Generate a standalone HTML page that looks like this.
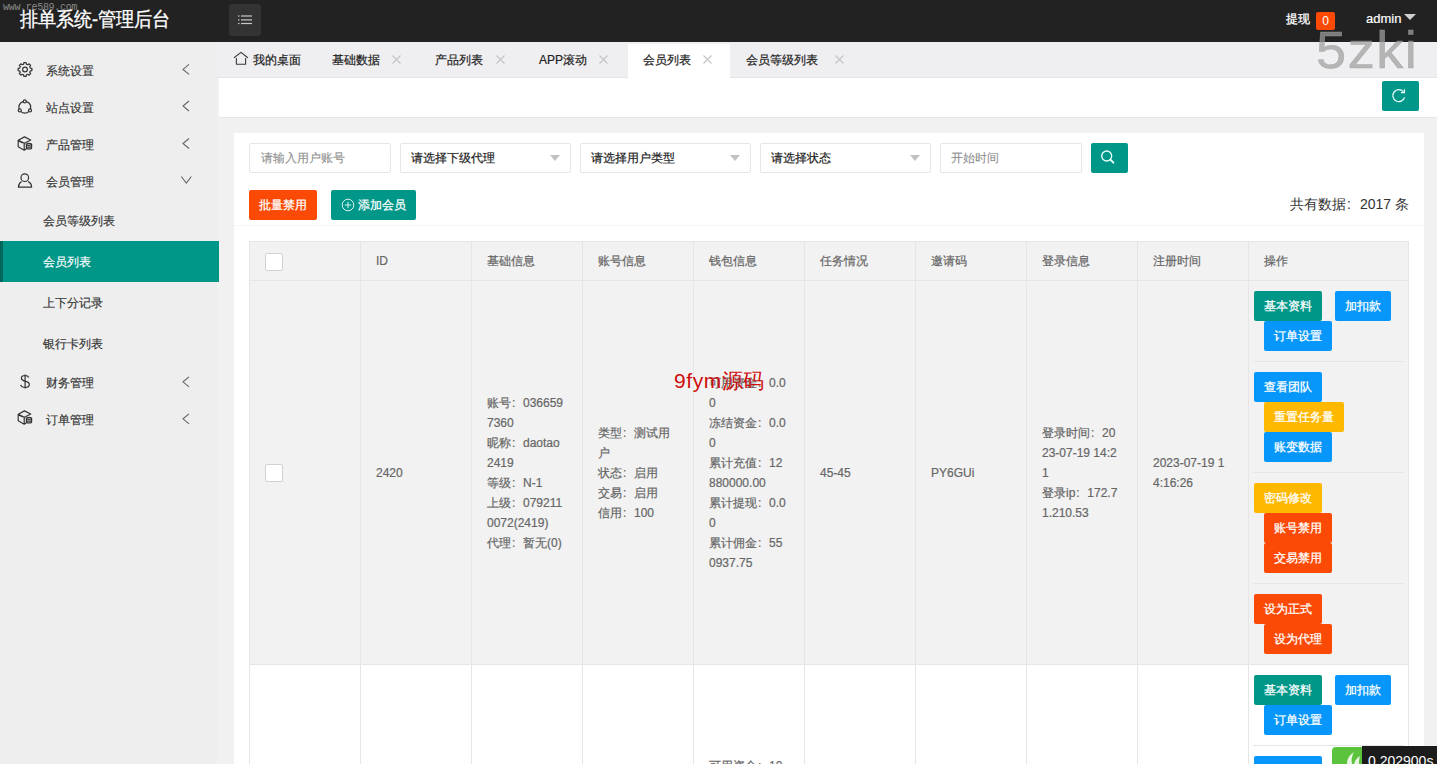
<!DOCTYPE html>
<html><head><meta charset="utf-8">
<style>
*{margin:0;padding:0;box-sizing:border-box}
html,body{width:1437px;height:764px;overflow:hidden;background:#f1f1f1;font-family:"Liberation Sans",sans-serif;font-size:12px;color:#333}
.a{position:absolute}
.hdr{left:0;top:0;width:1437px;height:42px;background:#222}
.wm1{left:3px;top:2px;font-family:"Liberation Mono",monospace;font-size:10px;line-height:12px;color:#8a8a8a;letter-spacing:-0.3px;z-index:2}
.title{left:20px;top:8px;font-size:18px;color:#fff;font-weight:normal;-webkit-text-stroke:0.3px #fff;line-height:22px;white-space:nowrap;transform:scaleY(1.1);transform-origin:0 50%}
.menubtn{left:229px;top:4px;width:32px;height:32px;background:#333;border-radius:3px}
.side{left:0;top:42px;width:217px;height:722px;background:#eee}
.nav{left:46px;font-size:12px;color:#333;line-height:14px;white-space:nowrap;-webkit-text-stroke:0.15px #333}
.sub{left:43px;font-size:12px;color:#333;line-height:14px;white-space:nowrap;-webkit-text-stroke:0.15px currentColor}
.ico{left:17px;width:16px;height:16px}
.chev{left:181px;width:10px;height:12px}
.tabs{left:216px;top:42px;width:1221px;height:36px;background:#efeef1;border-bottom:1px solid #e4e3e6}
.tab{top:53px;font-size:12px;color:#222;line-height:14px;white-space:nowrap;-webkit-text-stroke:0.2px #222}
.x{top:55px;width:9px;height:9px}
.strip{left:219px;top:78px;width:1218px;height:40px;background:#fff;border-bottom:1px solid #e6e6e6}
.card{left:234px;top:133px;width:1190px;height:640px;background:#fff}
.inp{height:30px;border:1px solid #e6e6e6;background:#fff;border-radius:2px}
.ph{font-size:12px;color:#8f8f8f;line-height:14px;white-space:nowrap;-webkit-text-stroke:0.1px #8f8f8f}
.sel{font-size:12px;color:#222;line-height:14px;white-space:nowrap;-webkit-text-stroke:0.2px #222}
.btn{height:30px;border-radius:2px;color:#fff;font-size:12px;line-height:30px;text-align:center;white-space:nowrap;-webkit-text-stroke:0.25px #fff}
.g{background:#009688}.b{background:#0797fb}.o{background:#ffb800}.r{background:#fb4a05}
table{border-collapse:collapse;table-layout:fixed}
td,th{border:1px solid #e6e6e6;font-weight:normal;text-align:left;color:#666;font-size:12px;line-height:20px;vertical-align:middle;padding:0 15px;word-break:break-all}
.wm2{left:1316px;top:19.5px;font-size:52px;line-height:60px;color:rgba(160,160,160,.72);letter-spacing:1.5px;white-space:nowrap;transform:scaleX(1.04);transform-origin:0 0;-webkit-text-stroke:0.5px rgba(160,160,160,.72)}
.arr{width:0;height:0;border-left:5.5px solid transparent;border-right:5.5px solid transparent;border-top:6px solid #c2c2c2}
.cell{font-size:12px;color:#666;line-height:20px;white-space:nowrap;-webkit-text-stroke:0.2px #666}
.hl{background:#e6e6e6}
.c{display:inline-block;width:1em;font-style:normal;text-indent:1px}
</style></head><body>
<!-- header -->
<div class="a hdr"></div>
<div class="a wm1">www.re589.com</div>
<div class="a title">排单系统-管理后台</div>
<div class="a menubtn"></div>
<svg class="a" style="left:237px;top:14px" width="16" height="12" viewBox="0 0 16 12"><g fill="#c8c8c8"><rect x="1" y="1.4" width="1.5" height="1.2"/><rect x="4" y="1.4" width="11" height="1.2"/><rect x="1" y="5.3" width="1.5" height="1.2"/><rect x="4" y="5.3" width="11" height="1.2"/><rect x="1" y="8.9" width="1.5" height="1.2"/><rect x="4" y="8.9" width="11" height="1.2"/></g></svg>


<div class="a" style="left:1286px;top:12px;font-size:12px;color:#fff;line-height:14px;-webkit-text-stroke:0.3px #fff">提现</div>
<div class="a" style="left:1316px;top:12px;width:19px;height:18px;background:#fb4a05;border-radius:2px;color:#fff;font-size:12px;line-height:18px;text-align:center">0</div>
<div class="a" style="left:1366px;top:11px;font-size:13px;color:#fff;line-height:15px;-webkit-text-stroke:0.2px #fff">admin</div>
<div class="a" style="left:1404px;top:14px;width:0;height:0;border-left:6px solid transparent;border-right:6px solid transparent;border-top:6px solid #d0d0d0"></div>

<!-- sidebar -->
<div class="a side"></div>
<div class="a nav" style="top:64px">系统设置</div>
<div class="a nav" style="top:101px">站点设置</div>
<div class="a nav" style="top:138px">产品管理</div>
<div class="a nav" style="top:175px">会员管理</div>
<div class="a sub" style="top:214px">会员等级列表</div>
<div class="a" style="left:0;top:241px;width:219px;height:41px;background:#009688"></div>
<div class="a" style="left:0;top:241px;width:3px;height:41px;background:#00665c"></div>
<div class="a sub" style="top:255px;color:#fff">会员列表</div>
<div class="a sub" style="top:296px">上下分记录</div>
<div class="a sub" style="top:337px">银行卡列表</div>
<div class="a nav" style="top:376px">财务管理</div>
<div class="a nav" style="top:413px">订单管理</div>


<svg class="a" style="left:0;top:42px" width="216" height="400" viewBox="0 42 216 400" fill="none" stroke="#333" stroke-width="1.2">
<!-- gear -->
<path d="M30.33 68.13 L31.91 68.40 L31.91 70.60 L30.33 70.87 L29.73 72.30 L30.66 73.61 L29.11 75.16 L27.80 74.23 L26.37 74.83 L26.10 76.41 L23.90 76.41 L23.63 74.83 L22.20 74.23 L20.89 75.16 L19.34 73.61 L20.27 72.30 L19.67 70.87 L18.09 70.60 L18.09 68.40 L19.67 68.13 L20.27 66.70 L19.34 65.39 L20.89 63.84 L22.20 64.77 L23.63 64.17 L23.90 62.59 L26.10 62.59 L26.37 64.17 L27.80 64.77 L29.11 63.84 L30.66 65.39 L29.73 66.70Z" stroke-linejoin="round"/>
<circle cx="25" cy="69.5" r="2.4"/>
<!-- share/network -->
<circle cx="24.8" cy="107.2" r="5.9"/>
<circle cx="24.8" cy="101.4" r="1.5" fill="#eee"/>
<circle cx="19.7" cy="110.4" r="1.5" fill="#eee"/>
<circle cx="30" cy="110.4" r="1.5" fill="#eee"/>
<!-- box 1 -->
<g transform="translate(12,131)"><path d="M6.2 9.2L12.5 5.9 18.7 9 12.5 12.3zM6.2 9.2V15.8L12.2 19.2V12.3M12.2 19.2L14.3 18M8 10.5l2.5 1.4" stroke-linejoin="round"/><ellipse cx="17" cy="13.3" rx="2.6" ry="1"/><path d="M14.4 13.3v3.6c0 .6 1.2 1 2.6 1s2.6-.4 2.6-1v-3.6M14.4 15.2c0 .6 1.2 1 2.6 1s2.6-.4 2.6-1"/></g>
<!-- user -->
<circle cx="24.8" cy="177.7" r="3.8"/>
<path d="M21.5 181.6C19.5 183 18.4 184.8 18.4 187.2H31.6C31.6 184.6 30 182.4 28 181.6" stroke-linejoin="round"/>
<!-- dollar -->
<path d="M28.8 377.6c-.6-1.4-2-2.1-3.7-2.1-2.2 0-3.7 1.1-3.7 2.7 0 1.7 1.5 2.4 3.7 3 2.4.6 4.2 1.3 4.2 3.3 0 1.8-1.7 3-4.2 3-2.2 0-3.9-1-4.5-2.6M25.1 374.4v14.2"/>
<!-- box 2 -->
<g transform="translate(12,405)"><path d="M6.2 9.2L12.5 5.9 18.7 9 12.5 12.3zM6.2 9.2V15.8L12.2 19.2V12.3M12.2 19.2L14.3 18M8 10.5l2.5 1.4" stroke-linejoin="round"/><ellipse cx="17" cy="13.3" rx="2.6" ry="1"/><path d="M14.4 13.3v3.6c0 .6 1.2 1 2.6 1s2.6-.4 2.6-1v-3.6M14.4 15.2c0 .6 1.2 1 2.6 1s2.6-.4 2.6-1"/></g>
<!-- chevrons -->
<g stroke="#666" stroke-width="1.1"><path d="M189 64.4L183 69.4 189 74.4"/><path d="M189 101L183 106 189 111"/><path d="M189 138.5L183 143.5 189 148.5"/><path d="M181.3 176.5L186.3 183 191.3 176.5"/><path d="M189 376.8L183 381.8 189 386.8"/><path d="M189 413.8L183 418.8 189 423.8"/></g>
</svg>

<!-- tabs -->
<div class="a tabs"></div>
<div class="a" style="left:628px;top:44px;width:102px;height:35px;background:#fff"></div>
<svg class="a" style="left:233px;top:51px" width="16" height="15" viewBox="0 0 16 15" fill="none" stroke="#3a3a3a" stroke-width="1.1"><path d="M1 6.7L8 1.4 14.8 6.7M3.4 6.9V13.3H12.6V6.9" stroke-linejoin="round"/></svg>
<div class="a tab" style="left:253px">我的桌面</div>
<div class="a tab" style="left:332px">基础数据</div><svg class="a x" style="left:392px" viewBox="0 0 9 9"><path d="M.5 .5L8.5 8.5M8.5 .5L.5 8.5" stroke="#c4c4c4" stroke-width="1.1"/></svg>
<div class="a tab" style="left:435px">产品列表</div><svg class="a x" style="left:496px" viewBox="0 0 9 9"><path d="M.5 .5L8.5 8.5M8.5 .5L.5 8.5" stroke="#c4c4c4" stroke-width="1.1"/></svg>
<div class="a tab" style="left:539px">APP滚动</div><svg class="a x" style="left:599px" viewBox="0 0 9 9"><path d="M.5 .5L8.5 8.5M8.5 .5L.5 8.5" stroke="#c4c4c4" stroke-width="1.1"/></svg>
<div class="a tab" style="left:643px">会员列表</div><svg class="a x" style="left:703px" viewBox="0 0 9 9"><path d="M.5 .5L8.5 8.5M8.5 .5L.5 8.5" stroke="#c4c4c4" stroke-width="1.1"/></svg>
<div class="a tab" style="left:746px">会员等级列表</div><svg class="a x" style="left:835px" viewBox="0 0 9 9"><path d="M.5 .5L8.5 8.5M8.5 .5L.5 8.5" stroke="#c4c4c4" stroke-width="1.1"/></svg>


<!-- strip -->
<div class="a strip"></div>
<div class="a btn g" style="left:1382px;top:81px;width:37px;height:30px"></div>
<svg class="a" style="left:1391px;top:88px" width="16" height="16" viewBox="0 0 16 16" fill="none" stroke="#e8fffa" stroke-width="1.3"><path d="M13.6 9.4A6 6 0 1 1 12.3 3.6"/><path d="M13.4 1.2V4.7H9.9" stroke-linejoin="miter"/></svg>
<div class="a wm2">5zki</div>


<!-- card -->
<div class="a card"></div>
<div class="a inp" style="left:249px;top:143px;width:142px"></div><div class="a ph" style="left:261px;top:151px">请输入用户账号</div>
<div class="a inp" style="left:400px;top:143px;width:171px"></div><div class="a sel" style="left:411px;top:151px">请选择下级代理</div><div class="a arr" style="left:550px;top:155px"></div>
<div class="a inp" style="left:580px;top:143px;width:171px"></div><div class="a sel" style="left:591px;top:151px">请选择用户类型</div><div class="a arr" style="left:730px;top:155px"></div>
<div class="a inp" style="left:760px;top:143px;width:171px"></div><div class="a sel" style="left:771px;top:151px">请选择状态</div><div class="a arr" style="left:910px;top:155px"></div>
<div class="a inp" style="left:940px;top:143px;width:142px"></div><div class="a ph" style="left:951px;top:151px">开始时间</div>
<div class="a btn g" style="left:1091px;top:143px;width:37px"></div><svg class="a" style="left:1099px;top:148px" width="18" height="18" viewBox="0 0 18 18" fill="none" stroke="#e8fffa" stroke-width="1.3"><circle cx="7.7" cy="8" r="5"/><path d="M11.4 11.6L14.4 14.6" stroke-width="2" stroke-linecap="round"/></svg>
<div class="a btn r" style="left:249px;top:190px;width:68px">批量禁用</div>
<div class="a btn g" style="left:331px;top:190px;width:85px;text-align:left;padding-left:27px">添加会员</div><svg class="a" style="left:341px;top:198px" width="14" height="14" viewBox="0 0 14 14" fill="none" stroke="#d9f5f0" stroke-width="1"><circle cx="7" cy="7" r="5.8"/><path d="M7 3.8V10.2M3.8 7H10.2"/></svg>
<div class="a" style="left:1290px;top:196px;font-size:14px;color:#333;line-height:16px;white-space:nowrap">共有数据<i class="c">:</i>2017 条</div>
<div class="a" style="left:234px;top:225px;width:1190px;height:1px;background:#f6f6f6"></div>
<div class="a" style="left:249px;top:241px;width:1160px;height:424px;background:#f2f2f2"></div>
<div class="a" style="left:249px;top:665px;width:1160px;height:100px;background:#fff"></div>
<div class="a hl" style="left:249px;top:241px;width:1px;height:523px"></div>
<div class="a hl" style="left:360px;top:241px;width:1px;height:523px"></div>
<div class="a hl" style="left:471px;top:241px;width:1px;height:523px"></div>
<div class="a hl" style="left:582px;top:241px;width:1px;height:523px"></div>
<div class="a hl" style="left:693px;top:241px;width:1px;height:523px"></div>
<div class="a hl" style="left:804px;top:241px;width:1px;height:523px"></div>
<div class="a hl" style="left:915px;top:241px;width:1px;height:523px"></div>
<div class="a hl" style="left:1026px;top:241px;width:1px;height:523px"></div>
<div class="a hl" style="left:1137px;top:241px;width:1px;height:523px"></div>
<div class="a hl" style="left:1248px;top:241px;width:1px;height:523px"></div>
<div class="a hl" style="left:1408px;top:241px;width:1px;height:523px"></div>
<div class="a hl" style="left:249px;top:241px;width:1160px;height:1px"></div>
<div class="a hl" style="left:249px;top:280px;width:1160px;height:1px"></div>
<div class="a hl" style="left:249px;top:664px;width:1160px;height:1px"></div>
<div class="a cell" style="left:376px;top:251px">ID</div>
<div class="a cell" style="left:487px;top:251px">基础信息</div>
<div class="a cell" style="left:598px;top:251px">账号信息</div>
<div class="a cell" style="left:709px;top:251px">钱包信息</div>
<div class="a cell" style="left:820px;top:251px">任务情况</div>
<div class="a cell" style="left:931px;top:251px">邀请码</div>
<div class="a cell" style="left:1042px;top:251px">登录信息</div>
<div class="a cell" style="left:1153px;top:251px">注册时间</div>
<div class="a cell" style="left:1264px;top:251px">操作</div>
<div class="a" style="left:265px;top:253px;width:18px;height:18px;border:1px solid #d2d2d2;background:#fff;border-radius:2px"></div>
<div class="a" style="left:265px;top:464px;width:18px;height:18px;border:1px solid #d2d2d2;background:#fff;border-radius:2px"></div>
<div class="a cell" style="left:376px;top:463px">2420</div>
<div class="a cell" style="left:487px;top:393px">账号<i class="c">:</i>036659<br>7360<br>昵称<i class="c">:</i>daotao<br>2419<br>等级<i class="c">:</i>N-1<br>上级<i class="c">:</i>079211<br>0072(2419)<br>代理<i class="c">:</i>暂无(0)</div>
<div class="a cell" style="left:598px;top:423px">类型<i class="c">:</i>测试用<br>户<br>状态<i class="c">:</i>启用<br>交易<i class="c">:</i>启用<br>信用<i class="c">:</i>100</div>
<div class="a cell" style="left:709px;top:373px">可用资金<i class="c">:</i>0.0<br>0<br>冻结资金<i class="c">:</i>0.0<br>0<br>累计充值<i class="c">:</i>12<br>880000.00<br>累计提现<i class="c">:</i>0.0<br>0<br>累计佣金<i class="c">:</i>55<br>0937.75</div>
<div class="a cell" style="left:820px;top:463px">45-45</div>
<div class="a cell" style="left:931px;top:463px">PY6GUi</div>
<div class="a cell" style="left:1042px;top:423px">登录时间<i class="c">:</i>20<br>23-07-19 14:2<br>1<br>登录ip<i class="c">:</i>172.7<br>1.210.53</div>
<div class="a cell" style="left:1153px;top:453px">2023-07-19 1<br>4:16:26</div>
<div class="a" style="left:674px;top:369px;font-size:21px;color:#d00d0d;line-height:24px;white-space:nowrap"><span style="letter-spacing:0.6px">9fym</span>源码</div>
<div class="a btn g" style="left:1254px;top:291px;width:68px">基本资料</div>
<div class="a btn b" style="left:1335px;top:291px;width:56px">加扣款</div>
<div class="a btn b" style="left:1264px;top:321px;width:68px">订单设置</div>
<div class="a" style="left:1253px;top:361px;width:151px;height:1px;background:#e6e6e6"></div>
<div class="a btn b" style="left:1254px;top:372px;width:68px">查看团队</div>
<div class="a btn o" style="left:1264px;top:402px;width:80px">重置任务量</div>
<div class="a btn b" style="left:1264px;top:432px;width:68px">账变数据</div>
<div class="a" style="left:1253px;top:472px;width:151px;height:1px;background:#e6e6e6"></div>
<div class="a btn o" style="left:1254px;top:483px;width:68px">密码修改</div>
<div class="a btn r" style="left:1264px;top:513px;width:68px">账号禁用</div>
<div class="a btn r" style="left:1264px;top:543px;width:68px">交易禁用</div>
<div class="a" style="left:1253px;top:583px;width:151px;height:1px;background:#e6e6e6"></div>
<div class="a btn r" style="left:1254px;top:594px;width:68px">设为正式</div>
<div class="a btn r" style="left:1264px;top:624px;width:68px">设为代理</div>
<div class="a btn g" style="left:1254px;top:675px;width:68px">基本资料</div>
<div class="a btn b" style="left:1335px;top:675px;width:56px">加扣款</div>
<div class="a btn b" style="left:1264px;top:705px;width:68px">订单设置</div>
<div class="a" style="left:1253px;top:745px;width:151px;height:1px;background:#e6e6e6"></div>
<div class="a btn b" style="left:1254px;top:756px;width:68px">查看团队</div>
<div class="a btn o" style="left:1264px;top:786px;width:80px">重置任务量</div>
<div class="a btn b" style="left:1264px;top:816px;width:68px">账变数据</div>
<div class="a" style="left:1253px;top:856px;width:151px;height:1px;background:#e6e6e6"></div>
<div class="a btn o" style="left:1254px;top:867px;width:68px">密码修改</div>
<div class="a btn r" style="left:1264px;top:897px;width:68px">账号禁用</div>
<div class="a btn r" style="left:1264px;top:927px;width:68px">交易禁用</div>
<div class="a" style="left:1253px;top:967px;width:151px;height:1px;background:#e6e6e6"></div>
<div class="a btn r" style="left:1254px;top:978px;width:68px">设为正式</div>
<div class="a btn r" style="left:1264px;top:1008px;width:68px">设为代理</div>
<div class="a cell" style="left:709px;top:756px">可用资金<i class="c">:</i>10</div>
<div class="a" style="left:1332px;top:747px;width:30px;height:17px;background:#5cc43c;border-radius:4px 0 0 0;overflow:hidden"><svg width="30" height="17" viewBox="0 0 30 17"><path d="M15 17C15 11 18 8 22 5 20 9 19 12 20 17Z" fill="#e9f7e4"/><path d="M22 17C23 13 25 11 28 9 27 12 27 14 27 17Z" fill="#e9f7e4"/></svg></div>
<div class="a" style="left:1362px;top:746px;width:75px;height:18px;background:#1c1c1c;color:#fff;font-size:14px;line-height:18px;padding-left:6px;padding-top:6px;white-space:nowrap">0.202900s</div>

</body></html>
